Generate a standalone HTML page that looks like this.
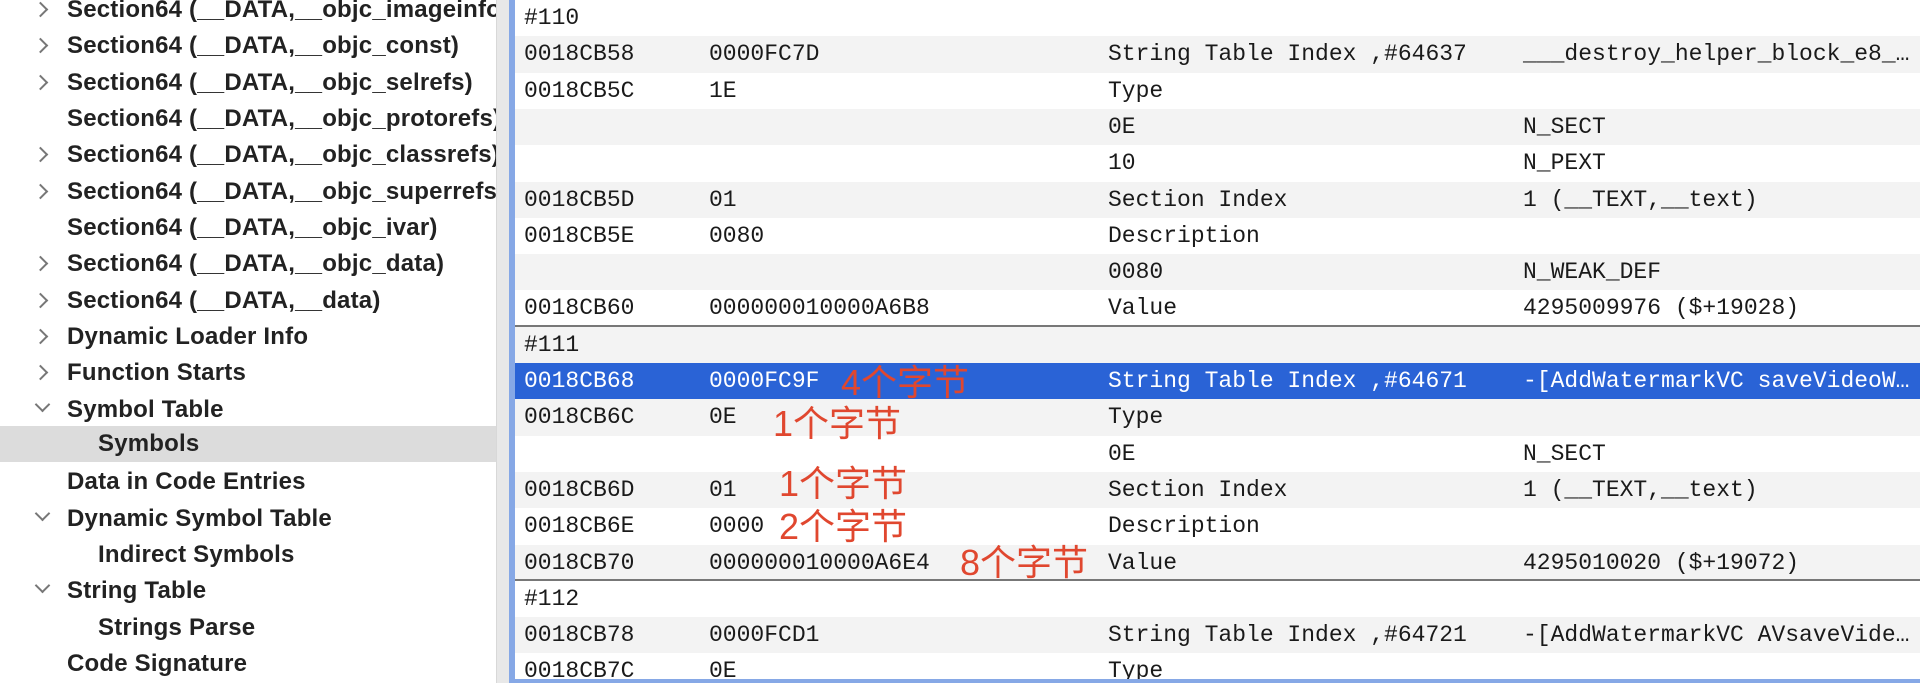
<!DOCTYPE html>
<html><head><meta charset="utf-8"><style>
*{margin:0;padding:0;box-sizing:border-box}
body{width:1920px;height:683px;overflow:hidden;background:#fff;position:relative}
.sb{position:absolute;left:0;top:0;width:496px;height:683px;background:#fff;overflow:hidden}
.si{position:absolute;left:0;width:496px;height:36px;font:bold 24px "Liberation Sans",sans-serif;letter-spacing:0.2px;color:#222;white-space:nowrap;line-height:36px}
.si span.t{position:absolute;left:67px}
.si span.t2{position:absolute;left:98px}
.ch{position:absolute;left:35px;top:12px;width:11px;height:11px;border-right:2.5px solid #777;border-bottom:2.5px solid #777}
.r{transform:rotate(-45deg)}
.d{transform:rotate(45deg);top:7px;left:37px}
.sep{position:absolute;left:496px;top:0;width:13px;height:683px;background:#e8e8e8;border-left:1px solid #d8d8d8}
.bl{position:absolute;left:509px;top:0;width:6px;height:683px;background:#86a8e6}
.tb{position:absolute;left:515px;top:0;right:0;height:683px;overflow:hidden}
.row{position:absolute;left:0;right:0;height:36.3px;font:23px "Liberation Mono",monospace;color:#1a1a1a;white-space:nowrap;line-height:36px;letter-spacing:0}
.row.g{background:#f3f3f3}
.row.sel{background:#2a63d6;color:#fff}
.row.line{border-bottom:2px solid #777}
.row span{position:absolute}
.c1{left:9px}.c2{left:194px}.c3{left:593px}.c4{left:1008px}
.ann{position:absolute;font:36px "Liberation Sans","Noto Sans CJK SC",sans-serif;color:#e0472f;white-space:nowrap;line-height:40px}
.bot{position:absolute;left:515px;right:0;top:679px;height:4px;background:#86a8e6}
</style></head><body>
<div class="sb">
<div class="si" style="top:-8px"><i class="ch r"></i><span class="t">Section64 (__DATA,__objc_imageinfo)</span></div>
<div class="si" style="top:28px"><i class="ch r"></i><span class="t">Section64 (__DATA,__objc_const)</span></div>
<div class="si" style="top:65px"><i class="ch r"></i><span class="t">Section64 (__DATA,__objc_selrefs)</span></div>
<div class="si" style="top:101px"><span class="t">Section64 (__DATA,__objc_protorefs)</span></div>
<div class="si" style="top:137px"><i class="ch r"></i><span class="t">Section64 (__DATA,__objc_classrefs)</span></div>
<div class="si" style="top:174px"><i class="ch r"></i><span class="t">Section64 (__DATA,__objc_superrefs)</span></div>
<div class="si" style="top:210px"><span class="t">Section64 (__DATA,__objc_ivar)</span></div>
<div class="si" style="top:246px"><i class="ch r"></i><span class="t">Section64 (__DATA,__objc_data)</span></div>
<div class="si" style="top:283px"><i class="ch r"></i><span class="t">Section64 (__DATA,__data)</span></div>
<div class="si" style="top:319px"><i class="ch r"></i><span class="t">Dynamic Loader Info</span></div>
<div class="si" style="top:355px"><i class="ch r"></i><span class="t">Function Starts</span></div>
<div class="si" style="top:392px"><i class="ch d"></i><span class="t">Symbol Table</span></div>
<div class="si" style="top:426px;background:#dcdcdc;height:36px"><span class="t2">Symbols</span></div>
<div class="si" style="top:464px"><span class="t">Data in Code Entries</span></div>
<div class="si" style="top:501px"><i class="ch d"></i><span class="t">Dynamic Symbol Table</span></div>
<div class="si" style="top:537px"><span class="t2">Indirect Symbols</span></div>
<div class="si" style="top:573px"><i class="ch d"></i><span class="t">String Table</span></div>
<div class="si" style="top:610px"><span class="t2">Strings Parse</span></div>
<div class="si" style="top:646px"><span class="t">Code Signature</span></div>
</div>
<div class="sep"></div><div class="bl"></div>
<div class="tb">
<div class="row" style="top:0"><span class="c1">#110</span></div>
<div class="row g" style="top:36.3px"><span class="c1">0018CB58</span><span class="c2">0000FC7D</span><span class="c3">String Table Index ,#64637</span><span class="c4">___destroy_helper_block_e8_…</span></div>
<div class="row" style="top:72.6px"><span class="c1">0018CB5C</span><span class="c2">1E</span><span class="c3">Type</span></div>
<div class="row g" style="top:108.9px"><span class="c3">0E</span><span class="c4">N_SECT</span></div>
<div class="row" style="top:145.2px"><span class="c3">10</span><span class="c4">N_PEXT</span></div>
<div class="row g" style="top:181.5px"><span class="c1">0018CB5D</span><span class="c2">01</span><span class="c3">Section Index</span><span class="c4">1 (__TEXT,__text)</span></div>
<div class="row" style="top:217.8px"><span class="c1">0018CB5E</span><span class="c2">0080</span><span class="c3">Description</span></div>
<div class="row g" style="top:254.1px"><span class="c3">0080</span><span class="c4">N_WEAK_DEF</span></div>
<div class="row line" style="top:290.4px"><span class="c1">0018CB60</span><span class="c2">000000010000A6B8</span><span class="c3">Value</span><span class="c4">4295009976 ($+19028)</span></div>
<div class="row g" style="top:326.7px"><span class="c1">#111</span></div>
<div class="row sel" style="top:363px"><span class="c1">0018CB68</span><span class="c2">0000FC9F</span><span class="c3">String Table Index ,#64671</span><span class="c4">-[AddWatermarkVC saveVideoW…</span></div>
<div class="row g" style="top:399.3px"><span class="c1">0018CB6C</span><span class="c2">0E</span><span class="c3">Type</span></div>
<div class="row" style="top:435.6px"><span class="c3">0E</span><span class="c4">N_SECT</span></div>
<div class="row g" style="top:471.9px"><span class="c1">0018CB6D</span><span class="c2">01</span><span class="c3">Section Index</span><span class="c4">1 (__TEXT,__text)</span></div>
<div class="row" style="top:508.2px"><span class="c1">0018CB6E</span><span class="c2">0000</span><span class="c3">Description</span></div>
<div class="row g line" style="top:544.5px"><span class="c1">0018CB70</span><span class="c2">000000010000A6E4</span><span class="c3">Value</span><span class="c4">4295010020 ($+19072)</span></div>
<div class="row" style="top:580.8px"><span class="c1">#112</span></div>
<div class="row g" style="top:617.1px"><span class="c1">0018CB78</span><span class="c2">0000FCD1</span><span class="c3">String Table Index ,#64721</span><span class="c4">-[AddWatermarkVC AVsaveVide…</span></div>
<div class="row" style="top:653.4px"><span class="c1">0018CB7C</span><span class="c2">0E</span><span class="c3">Type</span></div>
</div>
<div class="bot"></div>
<div class="ann" style="left:841px;top:363px">4个字节</div>
<div class="ann" style="left:773px;top:404px">1个字节</div>
<div class="ann" style="left:779px;top:464px">1个字节</div>
<div class="ann" style="left:779px;top:507px">2个字节</div>
<div class="ann" style="left:960px;top:543px">8个字节</div>
</body></html>
